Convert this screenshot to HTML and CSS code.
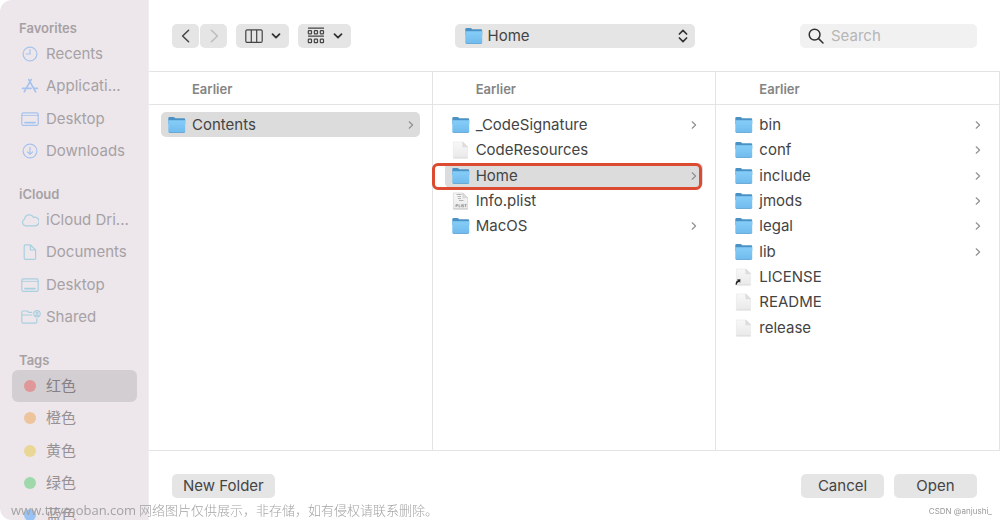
FILE: index.html
```html
<!DOCTYPE html>
<html lang="en">
<head>
<meta charset="utf-8">
<title>Open</title>
<link rel="stylesheet" href="styles.css">
</head>
<body>
<svg class="sprite" aria-hidden="true">
  <defs>
    <linearGradient id="folder-front" x1="0" y1="0" x2="0" y2="1">
      <stop offset="0" stop-color="#86cdf8"/><stop offset="1" stop-color="#70bbee"/>
    </linearGradient>
    <linearGradient id="paper" x1="0" y1="0" x2="0" y2="1">
      <stop offset="0" stop-color="#f8f8f8"/><stop offset="1" stop-color="#e9e9e9"/>
    </linearGradient>
  </defs>
  <symbol id="folder" viewBox="0 0 18 18">
    <path d="M.3 2.2Q.3 1 1.5 1H5.4Q6.1 1 6.6 1.6L7.2 2.2H16Q17.2 2.2 17.2 3.4V8H.3Z" fill="#4a92c6"/>
    <path d="M.3 4.2H17.2V15.2Q17.2 16.5 16 16.5H1.5Q.3 16.5.3 15.2Z" fill="url(#folder-front)"/>
    <path d="M.6 15.9Q.9 16.5 1.6 16.5H15.9Q16.6 16.5 16.9 15.9" fill="none" stroke="#5a9fce" stroke-width=".8"/>
  </symbol>
  <symbol id="file" viewBox="0 0 18 18">
    <path d="M1.4 1H10.8L15.6 5.8V17H1.4Z" fill="url(#paper)" stroke="#e6e6e6" stroke-width=".6"/>
    <path d="M10.8 1V5.8H15.6Z" fill="#dedede" stroke="#d4d4d4" stroke-width=".5"/>
    <path d="M1.4 17H15.6" stroke="#d6d6d6" stroke-width=".7"/>
  </symbol>
  <symbol id="plist" viewBox="0 0 18 18">
    <path d="M1.4 1H10.8L15.6 5.8V17H1.4Z" fill="url(#paper)" stroke="#cfcfcf" stroke-width=".6"/>
    <path d="M10.8 1V5.8H15.6Z" fill="#dcdcdc" stroke="#c4c4c4" stroke-width=".5"/>
    <path d="M4.5 2.5H9.5M5.5 4.5H9M6 6.5H9M7 8.5H11.5" stroke="#b4b4b4"/>
    <path d="M4 15V12.6H5.6V13.8H4.2M7 12.4V14.8H8.2M9.4 12.4V15M11.8 12.6H10.5V13.7H11.6V14.8H10.3M12.6 12.6H14.6M13.6 12.6V15" fill="none" stroke="#858585" stroke-width=".7"/>
    <path d="M1.4 17H15.6" stroke="#bbb" stroke-width=".7"/>
  </symbol>
  <symbol id="alias" viewBox="0 0 18 18">
    <use href="#file"/>
    <path d="M.6 16.8Q.6 12.8 3 12.6L2 11.6 5.4 11.2 5.2 14.8 4.2 13.8Q2.2 14.4 1.4 17Z" fill="#222"/>
  </symbol>
  <symbol id="chev" viewBox="0 0 8 10"><path d="M2.2 1.8 5.6 5 2.2 8.2" fill="none" stroke="currentColor" stroke-width="1.2" stroke-linecap="round" stroke-linejoin="round"/></symbol>
  <symbol id="down" viewBox="0 0 10 8"><path d="M1.5 2.2 5 5.6 8.5 2.2" fill="none" stroke="currentColor" stroke-width="1.8" stroke-linecap="round" stroke-linejoin="round"/></symbol>
  <symbol id="desktop" viewBox="0 0 18 18">
    <rect x=".8" y="2.8" width="16.4" height="12.6" rx="1.6"/><path d="M1 5.4H17" stroke-width=".9"/><path d="M4 12.6H14" stroke-width="1.8"/>
  </symbol>
</svg>

<div class="window">
  <nav class="sidebar" aria-label="Locations">
    <section class="group">
      <h2>Favorites</h2>
      <ul>
        <li><button class="place"><svg class="icon blue" viewBox="0 0 18 18"><circle cx="9" cy="9" r="6.9"/><path d="M9 4.6V9H5.2"/></svg><span>Recents</span></button></li>
        <li><button class="place"><svg class="icon blue" viewBox="0 0 18 18"><g stroke-width="1.7"><path d="M10.2 2.6 5.6 10.6M7.8 2.6 14.6 14.8M1.6 11.3H10M13 11.3H16.4M4.4 12.9 3.3 14.8"/></g></svg><span>Applicati...</span></button></li>
        <li><button class="place"><svg class="icon blue"><use href="#desktop"/></svg><span>Desktop</span></button></li>
        <li><button class="place"><svg class="icon blue" viewBox="0 0 18 18"><circle cx="9" cy="9" r="6.9"/><path d="M9 5.3V12.3M6.4 9.8 9 12.4 11.6 9.8"/></svg><span>Downloads</span></button></li>
      </ul>
    </section>
    <section class="group">
      <h2>iCloud</h2>
      <ul>
        <li><button class="place"><svg class="icon teal" viewBox="0 0 18 18"><path d="M4.6 14.8A3.6 3.6 0 0 1 3.6 8 4.8 4.8 0 0 1 12.6 6.4 4.3 4.3 0 1 1 13.6 14.8Z"/></svg><span>iCloud Dri...</span></button></li>
        <li><button class="place"><svg class="icon teal" viewBox="0 0 18 18"><path d="M4.4 1.8H9.4L14.6 7V15.2Q14.6 16.4 13.4 16.4H4.4Q3.2 16.4 3.2 15.2V3Q3.2 1.8 4.4 1.8ZM9.4 1.8V7H14.6"/></svg><span>Documents</span></button></li>
        <li><button class="place"><svg class="icon teal"><use href="#desktop"/></svg><span>Desktop</span></button></li>
        <li><button class="place"><svg class="icon teal wide" viewBox="0 0 18 18"><path d="M10.8 4.4H7.6L6.4 3H2Q.8 3 .8 4.2V14Q.8 15.2 2 15.2H14.6Q15.8 15.2 15.8 14V10.8M.8 7H10.8"/><circle cx="16" cy="5.8" r="3.2"/><circle cx="16" cy="5" r=".9"/><path d="M14.2 8Q16 6.2 17.8 8"/></svg><span>Shared</span></button></li>
      </ul>
    </section>
    <section class="group">
      <h2>Tags</h2>
      <ul>
        <li><button class="place tag chosen"><i class="dot red"></i><span>红色</span></button></li>
        <li><button class="place tag"><i class="dot orange"></i><span>橙色</span></button></li>
        <li><button class="place tag"><i class="dot yellow"></i><span>黄色</span></button></li>
        <li><button class="place tag"><i class="dot green"></i><span>绿色</span></button></li>
        <li><button class="place tag"><i class="dot azure"></i><span>蓝色</span></button></li>
      </ul>
    </section>
  </nav>

  <main class="main">
    <header class="toolbar">
      <div class="tools">
        <div class="pair">
          <button class="btn nav" aria-label="Back"><svg viewBox="0 0 14 14"><path d="M9.6 1.2 3.6 7 9.6 12.8"/></svg></button>
          <button class="btn nav off" aria-label="Forward"><svg viewBox="0 0 14 14"><path d="M4.4 1.2 10.4 7 4.4 12.8"/></svg></button>
        </div>
        <button class="btn view" aria-label="Column view"><svg class="glyph" viewBox="0 0 18 18"><rect x=".8" y="2.8" width="16.4" height="12.6" rx="1.5"/><path d="M6.3 3V15.2M11.7 3V15.2"/></svg><svg class="down"><use href="#down"/></svg></button>
        <button class="btn view" aria-label="Group items"><svg class="glyph" viewBox="0 0 18 18"><path d="M1 1.2H17M1 9.2H17"/><rect x="1.3" y="3.7" width="3.2" height="3.2" rx=".6"/><rect x="7.3" y="3.7" width="3.2" height="3.2" rx=".6"/><rect x="13.3" y="3.7" width="3.2" height="3.2" rx=".6"/><rect x="1.3" y="12.2" width="3.2" height="3.4" rx=".6"/><rect x="7.3" y="12.2" width="3.2" height="3.4" rx=".6"/><rect x="13.3" y="12.2" width="3.2" height="3.4" rx=".6"/></svg><svg class="down"><use href="#down"/></svg></button>
      </div>
      <div class="popup">
        <svg class="ficon"><use href="#folder"/></svg>
        <select aria-label="Location"><option>Home</option></select>
        <svg class="updown" viewBox="0 0 10 14"><path d="M1.4 5 5 1.4 8.6 5M1.4 9 5 12.6 8.6 9"/></svg>
      </div>
      <label class="search">
        <svg viewBox="0 0 16 16"><circle cx="6.6" cy="6.6" r="5.4"/><path d="M10.6 10.6 15 15"/></svg>
        <input type="text" placeholder="Search" aria-label="Search">
      </label>
    </header>

    <div class="columns">
      <section class="column">
        <h3>Earlier</h3>
        <ul class="files">
          <li><button class="file picked"><svg class="ficon"><use href="#folder"/></svg><span>Contents</span><svg class="chev"><use href="#chev"/></svg></button></li>
        </ul>
      </section>
      <section class="column">
        <h3>Earlier</h3>
        <ul class="files">
          <li><button class="file"><svg class="ficon"><use href="#folder"/></svg><span>_CodeSignature</span><svg class="chev"><use href="#chev"/></svg></button></li>
          <li><button class="file"><svg class="ficon"><use href="#file"/></svg><span>CodeResources</span></button></li>
          <li class="marked"><button class="file picked"><svg class="ficon"><use href="#folder"/></svg><span>Home</span><svg class="chev"><use href="#chev"/></svg></button></li>
          <li><button class="file"><svg class="ficon"><use href="#plist"/></svg><span>Info.plist</span></button></li>
          <li><button class="file"><svg class="ficon"><use href="#folder"/></svg><span>MacOS</span><svg class="chev"><use href="#chev"/></svg></button></li>
        </ul>
      </section>
      <section class="column">
        <h3>Earlier</h3>
        <ul class="files">
          <li><button class="file"><svg class="ficon"><use href="#folder"/></svg><span>bin</span><svg class="chev"><use href="#chev"/></svg></button></li>
          <li><button class="file"><svg class="ficon"><use href="#folder"/></svg><span>conf</span><svg class="chev"><use href="#chev"/></svg></button></li>
          <li><button class="file"><svg class="ficon"><use href="#folder"/></svg><span>include</span><svg class="chev"><use href="#chev"/></svg></button></li>
          <li><button class="file"><svg class="ficon"><use href="#folder"/></svg><span>jmods</span><svg class="chev"><use href="#chev"/></svg></button></li>
          <li><button class="file"><svg class="ficon"><use href="#folder"/></svg><span>legal</span><svg class="chev"><use href="#chev"/></svg></button></li>
          <li><button class="file"><svg class="ficon"><use href="#folder"/></svg><span>lib</span><svg class="chev"><use href="#chev"/></svg></button></li>
          <li><button class="file"><svg class="ficon"><use href="#alias"/></svg><span>LICENSE</span></button></li>
          <li><button class="file"><svg class="ficon"><use href="#file"/></svg><span>README</span></button></li>
          <li><button class="file"><svg class="ficon"><use href="#file"/></svg><span>release</span></button></li>
        </ul>
      </section>
    </div>

    <footer class="actions">
      <button class="btn text">New Folder</button>
      <div class="confirm">
        <button class="btn text">Cancel</button>
        <button class="btn text">Open</button>
      </div>
    </footer>
  </main>
</div>
<p class="note"><span>www.toymoban.com</span> 网络图片仅供展示，非存储，如有侵权请联系删除。</p>
<p class="credit">CSDN @anjushi_</p>
</body>
</html>
```
FILE: styles.css
```css
* { box-sizing: border-box; }

body {
  margin: 0;
  background: #fff;
  color: #444;
  font: 15px/20px Inter, "Noto Sans CJK SC", sans-serif;
}

h2, h3, p, ul { margin: 0; padding: 0; }
ul { list-style: none; }
button, select, input { font: inherit; color: inherit; border: 0; background: none; padding: 0; margin: 0; }
svg { flex: none; }
.sprite { position: absolute; width: 0; height: 0; }

.window {
  display: grid;
  grid-template-columns: 149px 1fr;
  height: 100vh;
  overflow: hidden;
}

.sidebar {
  display: flex;
  flex-direction: column;
  gap: 18px;
  min-height: 0;
  overflow: hidden;
  padding: 19px 11px 0 12px;
  background: #ede7eb;
  border-right: 1px solid #f1edf0;
  border-radius: 12px 0 0 12px;
  color: #a6a1a5;
}
.group h2 {
  padding-left: 7px;
  font-size: 13px;
  line-height: 19px;
  font-weight: 600;
}
.group ul { display: grid; grid-auto-rows: 32px 33px 32px; }
.place {
  display: flex;
  align-items: center;
  gap: 7px;
  width: 100%;
  height: 32px;
  padding-left: 9px;
  border-radius: 6px;
  white-space: nowrap;
}
.tag { color: #969195; }
.chosen { background: #d3ced2; color: #858085; }
.icon {
  width: 18px;
  height: 18px;
  fill: none;
  stroke-width: 1.2;
  stroke-linecap: round;
  stroke-linejoin: round;
}
.wide { overflow: visible; }
.blue { stroke: #a6c3ee; }
.teal { stroke: #a9d0e0; }
.dot { width: 12px; height: 12px; margin: 0 3px; border-radius: 50%; }
.red { background: #df9799; }
.orange { background: #edc49c; }
.yellow { background: #ebd795; }
.green { background: #9fd9ab; }
.azure { background: #9ac3f5; }

.main { display: grid; grid-template-rows: auto 1fr auto; min-width: 0; min-height: 0; }

.toolbar {
  display: grid;
  grid-template-columns: 1fr 240px 1fr;
  align-items: center;
  padding: 24px 23px 23px;
}
.tools { display: flex; gap: 9px; }
.pair { display: flex; gap: 1px; }
.btn {
  display: flex;
  align-items: center;
  justify-content: center;
  height: 24px;
  border-radius: 5px;
  background: #e5e5e5;
}
.nav { width: 27px; }
.nav svg { width: 14px; height: 14px; fill: none; stroke: #444; stroke-width: 1.5; stroke-linecap: round; stroke-linejoin: round; }
.off svg { stroke: #bcbcbc; }
.view { gap: 8px; width: 53px; }
.glyph { width: 18px; height: 18px; fill: none; stroke: #444; stroke-width: 1.2; }
.down { width: 10px; height: 8px; color: #333; }

.popup {
  display: flex;
  align-items: center;
  gap: 5px;
  height: 24px;
  padding: 0 7px 0 10px;
  border-radius: 5px;
  background: #e5e5e5;
}
.popup select { flex: 1; appearance: none; height: 24px; }
.updown { width: 10px; height: 14px; fill: none; stroke: #333; stroke-width: 1.7; stroke-linecap: round; stroke-linejoin: round; }

.search {
  display: flex;
  align-items: center;
  justify-self: end;
  gap: 7px;
  width: 177px;
  height: 24px;
  padding: 0 8px;
  border-radius: 5px;
  background: #f1f1f1;
}
.search svg { width: 16px; height: 16px; fill: none; stroke: #333; stroke-width: 1.5; stroke-linecap: round; }
.search input { flex: 1; min-width: 0; }
.search input::placeholder { color: #b6b6b6; opacity: 1; }

.columns {
  display: grid;
  grid-template-columns: repeat(3, 1fr);
  border-top: 1px solid #e4e4e4;
  border-bottom: 1px solid #e4e4e4;
}
.column { border-right: 1px solid #e4e4e4; }
.column h3 {
  height: 33px;
  padding-left: 43px;
  border-bottom: 1px solid #e4e4e4;
  font-size: 13px;
  line-height: 34px;
  font-weight: 600;
  color: #848484;
}
.files {
  display: grid;
  grid-auto-rows: 25px 26px 25px;
  padding: 7px 12px;
}
.file {
  display: flex;
  align-items: center;
  gap: 6px;
  width: 100%;
  height: 25px;
  padding: 0 5px 0 7px;
  border-radius: 5px;
  text-align: left;
}
.file span { flex: 1; }
.picked { background: #dcdcdc; }
.ficon { width: 18px; height: 18px; }
.chev { width: 8px; height: 10px; color: #909090; }

.marked { position: relative; }
.marked::after {
  content: "";
  position: absolute;
  inset: 0 1px -2px -13px;
  border: 3px solid #dc4a31;
  border-radius: 6px;
  pointer-events: none;
}

.actions {
  display: flex;
  justify-content: space-between;
  padding: 23px 23px 22px;
}
.confirm { display: flex; gap: 10px; }
.text { min-width: 83px; padding: 0 11px; }

.note, .credit { position: fixed; white-space: nowrap; }
.note {
  left: 11px;
  bottom: 1px;
  color: #a3a3a3;
  font: 300 13px/17px "Noto Sans CJK SC", sans-serif;
}
.note span { font: 13px/17px "Open Sans", sans-serif; }
.credit {
  right: 8px;
  bottom: 3px;
  color: #999;
  font-size: 8px;
  line-height: 12px;
}
```
